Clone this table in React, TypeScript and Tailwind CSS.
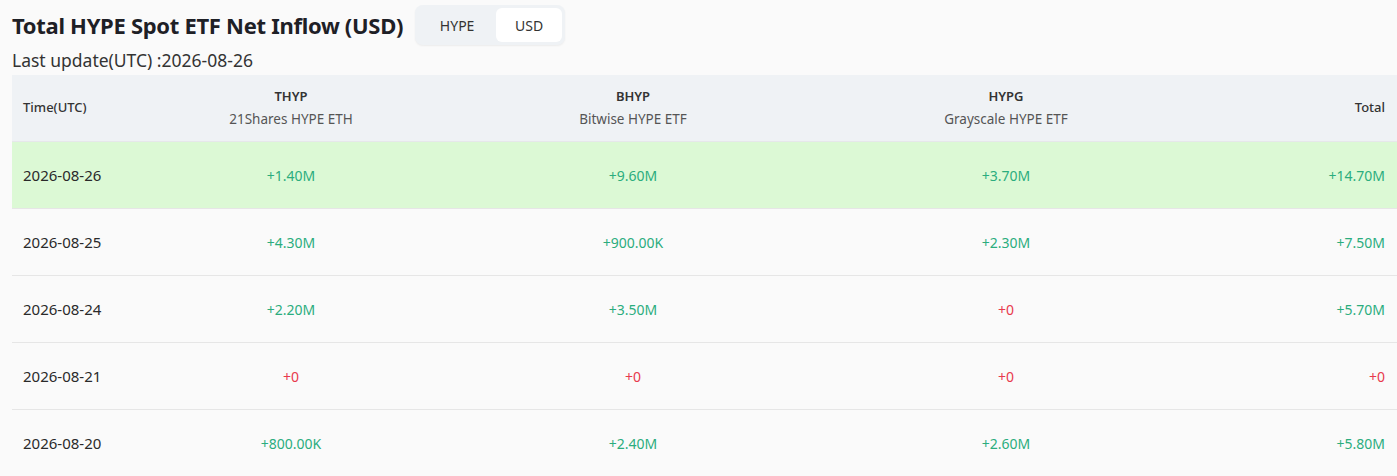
import React from "react";

type Row = { date: string; v: string[]; hl?: boolean };

const rows: Row[] = [
  { date: "2026-08-26", v: ["+1.40M", "+9.60M", "+3.70M", "+14.70M"], hl: true },
  { date: "2026-08-25", v: ["+4.30M", "+900.00K", "+2.30M", "+7.50M"] },
  { date: "2026-08-24", v: ["+2.20M", "+3.50M", "+0", "+5.70M"] },
  { date: "2026-08-21", v: ["+0", "+0", "+0", "+0"] },
  { date: "2026-08-20", v: ["+800.00K", "+2.40M", "+2.60M", "+5.80M"] },
];

const cols = "grid grid-cols-[168px_222px_462px_284px_1fr]";

function Val({ s, right }: { s: string; right?: boolean }) {
  const red = s === "+0";
  return (
    <div
      className={`flex items-center ${right ? "justify-end pr-[12px]" : "justify-center"} ${
        red ? "text-[#e8394d]" : "text-[#2bad7e]"
      }`}
    >
      {s}
    </div>
  );
}

export default function App() {
  return (
    <div
      className="w-[1397px] h-[476px] overflow-hidden bg-[#fafafa] text-[#222]"
      style={{ fontFamily: '"Noto Sans", "Open Sans", sans-serif' }}
    >
      <div className="flex items-center pl-[12px] pt-[5px] h-[45px]">
        <h1 className="text-[22px] font-bold tracking-[-0.3px] leading-none text-[#1e2026]">
          Total HYPE Spot ETF Net Inflow (USD)
        </h1>
        <div className="ml-[12px] flex h-[40px] w-[150px] items-center rounded-[8px] bg-[#eff2f5] p-[3px] shadow-[0_1px_2px_rgba(0,0,0,0.06)] text-[14px] text-[#333]">
          <div className="flex h-full w-[78px] items-center justify-center">HYPE</div>
          <div className="flex h-full flex-1 items-center justify-center rounded-[6px] bg-white">USD</div>
        </div>
      </div>
      <div className="pl-[12px] h-[30px] flex items-center text-[17.5px] text-[#333]">
        Last update(UTC) :2026-08-26
      </div>
      <div className="ml-[12px]">
        <div className={`${cols} h-[67px] bg-[#eff2f5] text-[13.5px] border-b border-[#e6e8ea]`}>
          <div className="flex items-center pl-[11px] text-[13px] font-medium text-[#333]">Time(UTC)</div>
          {[
            ["THYP", "21Shares HYPE ETH"],
            ["BHYP", "Bitwise HYPE ETF"],
            ["HYPG", "Grayscale HYPE ETF"],
          ].map(([a, b]) => (
            <div key={a} className="flex flex-col items-center justify-center gap-[2px]">
              <div className="font-semibold text-[13px] text-[#333]">{a}</div>
              <div className="text-[#555]">{b}</div>
            </div>
          ))}
          <div className="flex items-center justify-end pr-[12px] text-[13px] font-medium text-[#333]">Total</div>
        </div>
        {rows.map((r) => (
          <div
            key={r.date}
            className={`${cols} h-[67px] text-[14px] border-b border-[#e6e6e6] ${
              r.hl ? "bg-[#dcf9d5]" : ""
            }`}
          >
            <div className="flex items-center pl-[11px] text-[15px] text-[#2a2a2a]">{r.date}</div>
            <Val s={r.v[0]} />
            <Val s={r.v[1]} />
            <Val s={r.v[2]} />
            <Val s={r.v[3]} right />
          </div>
        ))}
      </div>
    </div>
  );
}
